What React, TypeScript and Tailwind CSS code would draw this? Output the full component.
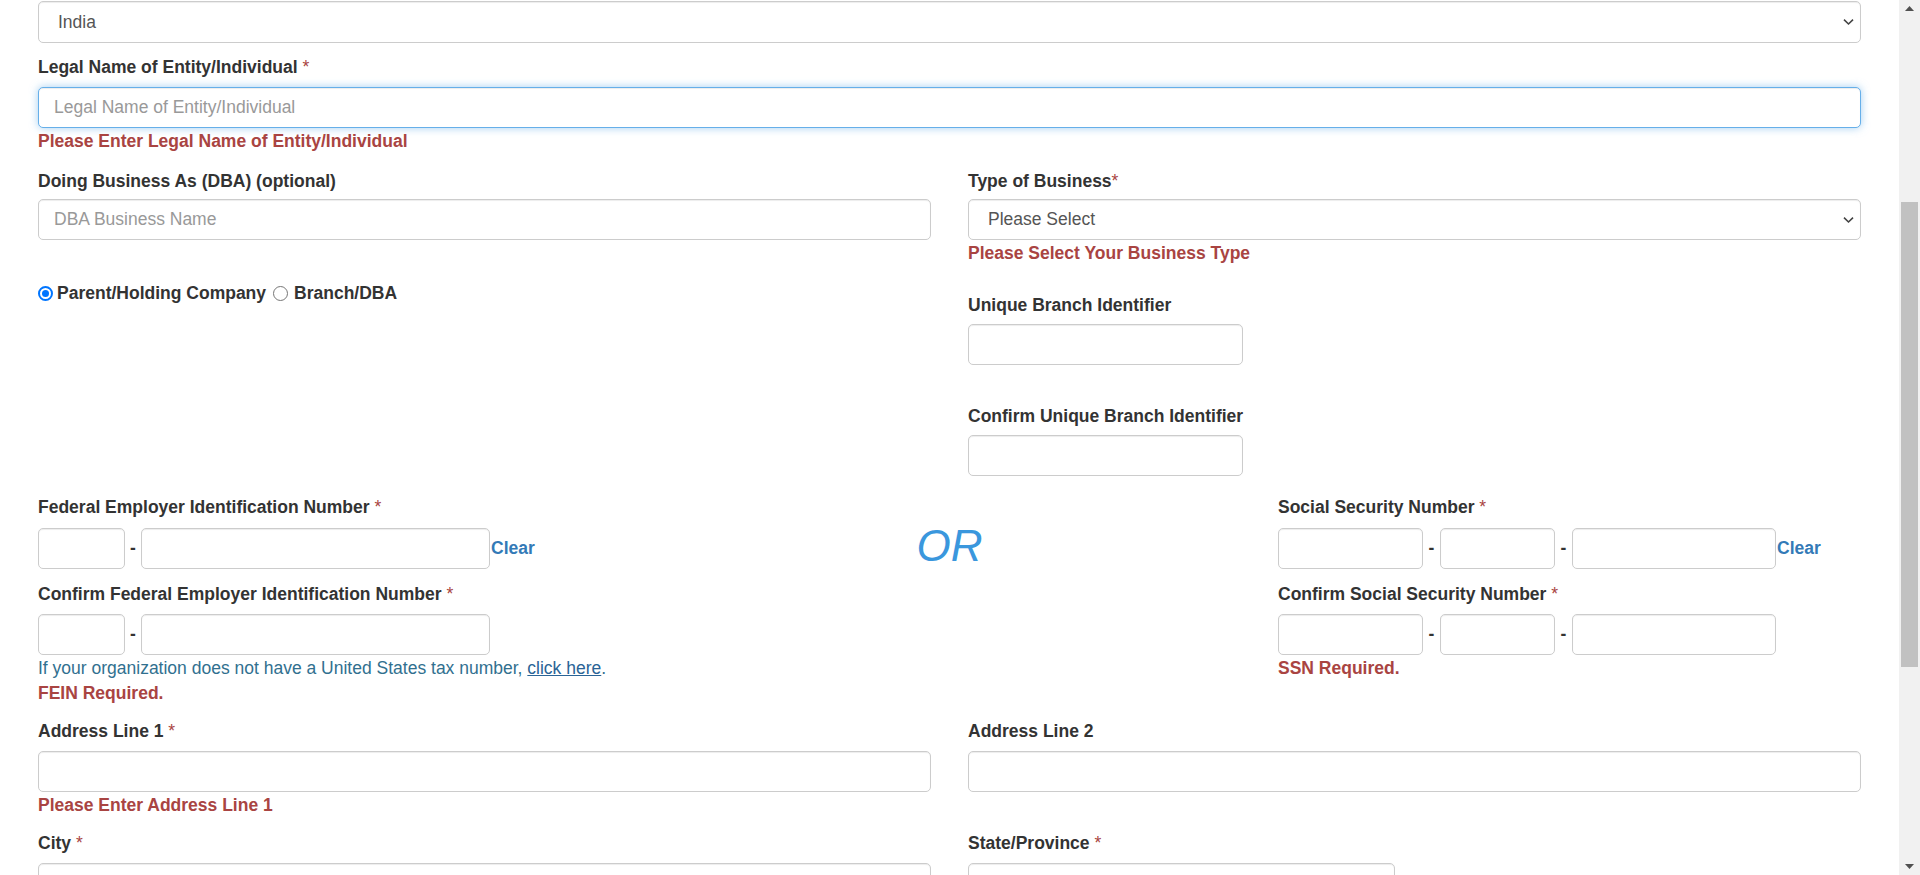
import React from "react";

const inputCore =
  "block bg-white border rounded-[5px] outline-none text-[17.5px] text-[#555] placeholder:text-[#999] px-[15px]";
const inputBase = inputCore + " border-[#ccc] shadow-[inset_0_1px_1px_rgba(0,0,0,0.075)]";

function Label({ children, req, tight }: { children: React.ReactNode; req?: boolean; tight?: boolean }) {
  return (
    <div className="font-bold text-[17.5px] leading-[25px] h-[25px] text-[#333] whitespace-nowrap">
      {children}
      {req ? (
        <span className="font-normal text-[#a94442]">{tight ? "*" : " *"}</span>
      ) : null}
    </div>
  );
}

function Err({ children }: { children: React.ReactNode }) {
  return <div className="font-bold text-[17.5px] leading-[25px] h-[25px] text-[#a94442] whitespace-nowrap">{children}</div>;
}

function Chevron() {
  return (
    <svg className="absolute right-[7px] top-1/2 -translate-y-1/2 pointer-events-none" width="11" height="7" viewBox="0 0 11 7">
      <path d="M1 1.2 L5.5 5.5 L10 1.2" fill="none" stroke="#444" strokeWidth="1.6" />
    </svg>
  );
}

function SelectBox({ value, className }: { value: string; className?: string }) {
  return (
    <div className={"relative " + (className || "")}>
      <div className={inputBase + " h-full flex items-center pl-[19px] text-[#555]"}>{value}</div>
      <Chevron />
    </div>
  );
}

function Dash({ w }: { w: string }) {
  return <div className={w + " shrink-0 text-center font-bold text-[17.5px] text-[#333] leading-[25px]"}>-</div>;
}

function Clear() {
  return <div className="pl-px font-bold text-[17.5px] text-[#337ab7] leading-[25px]">Clear</div>;
}

function Radio({ checked }: { checked?: boolean }) {
  if (checked) {
    return (
      <span className="shrink-0 w-[15px] h-[15px] rounded-full border-[2px] border-[#0075ff] flex items-center justify-center bg-white">
        <span className="block w-[7px] h-[7px] rounded-full bg-[#0075ff]" />
      </span>
    );
  }
  return <span className="shrink-0 block w-[15px] h-[15px] rounded-full border border-[#767676] bg-white" />;
}

export default function App() {
  return (
    <div className="h-[875px] w-full overflow-hidden flex bg-white font-['Liberation_Sans',Arial,sans-serif]">
      <div className="flex-1 px-[38px]">
        {/* Country select */}
        <SelectBox value="India" className="mt-px h-[42px]" />

        {/* Legal name */}
        <div className="mt-[12px]">
          <Label req>Legal Name of Entity/Individual</Label>
        </div>
        <input
          className={inputCore + " mt-[7px] h-[41px] w-full border-[#66afe9] shadow-[inset_0_1px_1px_rgba(0,0,0,0.075),0_0_8px_rgba(102,175,233,0.6)]"}
          placeholder="Legal Name of Entity/Individual"
        />
        <div className="mt-px">
          <Err>Please Enter Legal Name of Entity/Individual</Err>
        </div>

        {/* DBA / Type of business */}
        <div className="mt-[15px] grid grid-cols-2 gap-x-[37px]">
          <div>
            <Label>Doing Business As (DBA) (optional)</Label>
            <input className={inputBase + " mt-[5px] h-[41px] w-full"} placeholder="DBA Business Name" />
            <div className="mt-[41px] h-[25px] flex items-center font-bold text-[17.5px] text-[#333] leading-[25px]">
              <Radio checked />
              <span className="ml-[4px]">Parent/Holding Company</span>
              <span className="ml-[7px] flex items-center">
                <Radio />
              </span>
              <span className="ml-[6px]">Branch/DBA</span>
            </div>
          </div>
          <div>
            <Label req tight>Type of Business</Label>
            <SelectBox value="Please Select" className="mt-[5px] h-[41px]" />
            <div className="mt-px">
              <Err>Please Select Your Business Type</Err>
            </div>
            <div className="mt-[27px]">
              <Label>Unique Branch Identifier</Label>
            </div>
            <input className={inputBase + " mt-[6px] h-[41px] w-[275px]"} />
            <div className="mt-[39px]">
              <Label>Confirm Unique Branch Identifier</Label>
            </div>
            <input className={inputBase + " mt-[6px] h-[41px] w-[275px]"} />
          </div>
        </div>

        {/* FEIN / OR / SSN */}
        <div className="mt-[19px] grid grid-cols-3 gap-x-[37px]">
          <div>
            <Label req>Federal Employer Identification Number</Label>
            <div className="mt-[8px] flex items-center">
              <input className={inputBase + " h-[41px] w-[87px]"} />
              <Dash w="w-[16px]" />
              <input className={inputBase + " h-[41px] w-[349px]"} />
              <Clear />
            </div>
            <div className="mt-[13px]">
              <Label req>Confirm Federal Employer Identification Number</Label>
            </div>
            <div className="mt-[7px] flex items-center">
              <input className={inputBase + " h-[41px] w-[87px]"} />
              <Dash w="w-[16px]" />
              <input className={inputBase + " h-[41px] w-[349px]"} />
            </div>
            <div className="mt-px text-[17.5px] leading-[25px] h-[25px] text-[#31708f] whitespace-nowrap">
              If your organization does not have a United States tax number,{" "}
              <span className="underline text-[#2a6496]">click here</span>.
            </div>
            <Err>FEIN Required.</Err>
          </div>
          <div className="pt-[26px] flex justify-center">
            <div className="italic text-[44px] leading-[50px] text-[#3a97dd]">OR</div>
          </div>
          <div>
            <Label req>Social Security Number</Label>
            <div className="mt-[8px] flex items-center">
              <input className={inputBase + " h-[41px] w-[145px]"} />
              <Dash w="w-[17px]" />
              <input className={inputBase + " h-[41px] w-[115px]"} />
              <Dash w="w-[17px]" />
              <input className={inputBase + " h-[41px] w-[204px]"} />
              <Clear />
            </div>
            <div className="mt-[13px]">
              <Label req>Confirm Social Security Number</Label>
            </div>
            <div className="mt-[7px] flex items-center">
              <input className={inputBase + " h-[41px] w-[145px]"} />
              <Dash w="w-[17px]" />
              <input className={inputBase + " h-[41px] w-[115px]"} />
              <Dash w="w-[17px]" />
              <input className={inputBase + " h-[41px] w-[204px]"} />
            </div>
            <div className="mt-px">
              <Err>SSN Required.</Err>
            </div>
          </div>
        </div>

        {/* Address */}
        <div className="mt-[13px] grid grid-cols-2 gap-x-[37px]">
          <div>
            <Label req>Address Line 1</Label>
            <input className={inputBase + " mt-[7px] h-[41px] w-full"} />
            <div className="mt-px">
              <Err>Please Enter Address Line 1</Err>
            </div>
            <div className="mt-[13px]">
              <Label req>City</Label>
            </div>
            <input className={inputBase + " mt-[7px] h-[41px] w-full"} />
          </div>
          <div>
            <Label>Address Line 2</Label>
            <input className={inputBase + " mt-[7px] h-[41px] w-full"} />
            <div className="mt-[39px]">
              <Label req>State/Province</Label>
            </div>
            <input className={inputBase + " mt-[7px] h-[41px] w-[427px]"} />
          </div>
        </div>
      </div>

      {/* Scrollbar */}
      <div className="w-[21px] h-full bg-[#f1f1f1] flex flex-col items-center">
        <div className="h-[17px] w-full flex items-center justify-center">
          <svg width="9" height="5" viewBox="0 0 9 5">
            <path d="M0 5 L4.5 0 L9 5 Z" fill="#505050" />
          </svg>
        </div>
        <div className="mt-[185px] h-[465px] w-[17px] bg-[#c1c1c1]" />
        <div className="flex-1" />
        <div className="h-[17px] w-full flex items-center justify-center">
          <svg width="9" height="5" viewBox="0 0 9 5">
            <path d="M0 0 L4.5 5 L9 0 Z" fill="#505050" />
          </svg>
        </div>
      </div>
    </div>
  );
}
